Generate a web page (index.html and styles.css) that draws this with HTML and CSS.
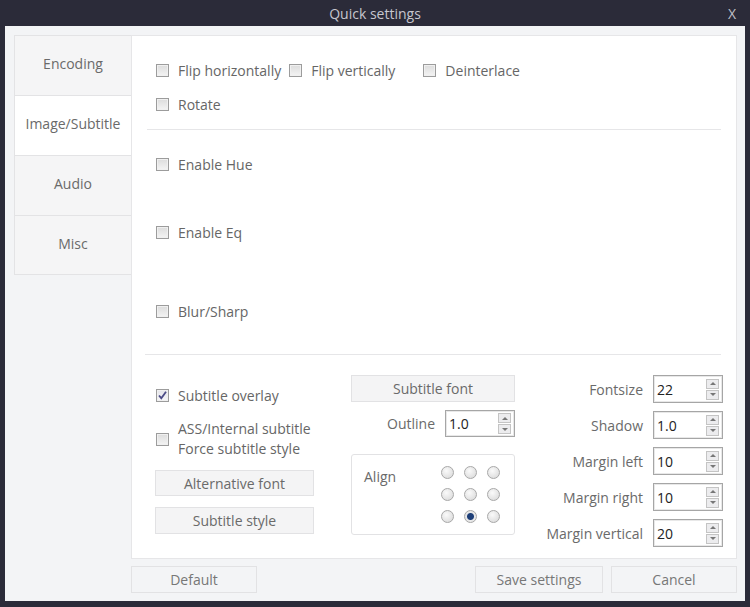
FILE: index.html
```html
<!DOCTYPE html>
<html lang="en">
<head>
  <meta charset="UTF-8">
  <title>Quick settings</title>
  <link rel="stylesheet" href="styles.css">
</head>
<body>
  <div class="window">
    <div class="titlebar">
      <span class="title">Quick settings</span>
      <span class="close">X</span>
    </div>

    <div class="frame">
      <div class="main">
        <div class="tabs">
          <div class="tab">Encoding</div>
          <div class="tab active">Image/Subtitle</div>
          <div class="tab">Audio</div>
          <div class="tab">Misc</div>
        </div>

        <div class="panel">
          <div class="row row-first">
            <label class="check"><span class="box"></span>Flip horizontally</label>
            <label class="check"><span class="box"></span>Flip vertically</label>
            <label class="check check-deint"><span class="box"></span>Deinterlace</label>
          </div>
          <div class="row row-rotate">
            <label class="check"><span class="box"></span>Rotate</label>
          </div>
          <div class="divider"></div>

          <div class="row row-hue">
            <label class="check"><span class="box"></span>Enable Hue</label>
          </div>
          <div class="row row-eq">
            <label class="check"><span class="box"></span>Enable Eq</label>
          </div>
          <div class="row row-blur">
            <label class="check"><span class="box"></span>Blur/Sharp</label>
          </div>
          <div class="divider divider-sub"></div>

          <div class="subs">
            <div class="col col-left">
              <label class="check"><span class="box checked">
                <svg width="11" height="11" viewBox="0 0 11 11"><path d="M2 5.5l2.3 2.7L9 1.8" fill="none" stroke="#4b4b86" stroke-width="1.8"/></svg>
              </span>Subtitle overlay</label>
              <label class="check check-two"><span class="box"></span>ASS/Internal subtitle<br>Force subtitle style</label>
              <button class="btn btn-alt">Alternative font</button>
              <button class="btn btn-style">Subtitle style</button>
            </div>

            <div class="col col-mid">
              <button class="btn">Subtitle font</button>
              <div class="field field-outline">
                <span class="field-label">Outline</span>
                <div class="spin"><span class="spin-value">1.0</span><span class="arrows"><i class="up"></i><i class="down"></i></span></div>
              </div>
              <div class="group">
                <span class="group-label">Align</span>
                <div class="radios">
                  <span class="radio"></span><span class="radio"></span><span class="radio"></span>
                  <span class="radio"></span><span class="radio"></span><span class="radio"></span>
                  <span class="radio"></span><span class="radio on"></span><span class="radio"></span>
                </div>
              </div>
            </div>

            <div class="col col-right">
              <div class="field">
                <span class="field-label">Fontsize</span>
                <div class="spin"><span class="spin-value">22</span><span class="arrows"><i class="up"></i><i class="down"></i></span></div>
              </div>
              <div class="field">
                <span class="field-label">Shadow</span>
                <div class="spin"><span class="spin-value">1.0</span><span class="arrows"><i class="up"></i><i class="down"></i></span></div>
              </div>
              <div class="field">
                <span class="field-label">Margin left</span>
                <div class="spin"><span class="spin-value">10</span><span class="arrows"><i class="up"></i><i class="down"></i></span></div>
              </div>
              <div class="field">
                <span class="field-label">Margin right</span>
                <div class="spin"><span class="spin-value">10</span><span class="arrows"><i class="up"></i><i class="down"></i></span></div>
              </div>
              <div class="field">
                <span class="field-label">Margin vertical</span>
                <div class="spin"><span class="spin-value">20</span><span class="arrows"><i class="up"></i><i class="down"></i></span></div>
              </div>
            </div>
          </div>
        </div>
      </div>

      <div class="footer">
        <button class="btn btn-foot">Default</button>
        <button class="btn btn-foot btn-save">Save settings</button>
        <button class="btn btn-foot">Cancel</button>
      </div>
    </div>
  </div>
</body>
</html>
```

FILE: styles.css
```css
* {
  margin: 0;
  padding: 0;
  box-sizing: border-box;
  font-family: "Open Sans", "Noto Sans", sans-serif;
}

body {
  width: 750px;
  height: 607px;
  background: #2b2b39;
  overflow: hidden;
}

.window {
  width: 750px;
  height: 607px;
}

.titlebar {
  position: relative;
  height: 26px;
  display: flex;
  align-items: center;
  justify-content: center;
  color: #c6c6ce;
  font-size: 14px;
}

.close {
  position: absolute;
  right: 14px;
  top: 4px;
  font-size: 14px;
  color: #c0c0c8;
}

.frame {
  margin: 0 5px;
  height: 575px;
  background: #f3f4f6;
  padding: 9px 8px 0 9px;
}

.main {
  display: flex;
  height: 524px;
}

.tabs {
  width: 117px;
  display: flex;
  flex-direction: column;
  align-self: flex-start;
  border: 1px solid #e3e3e5;
  border-right: none;
}

.tab {
  height: 60px;
  display: flex;
  align-items: center;
  justify-content: center;
  padding-bottom: 4px;
  font-size: 14px;
  color: #6a6a6a;
  background: #f5f5f6;
  border-bottom: 1px solid #e3e3e5;
}

.tab:last-child {
  border-bottom: none;
  height: 58px;
}

.tab.active {
  background: #fff;
}

.panel {
  flex: 1;
  background: #fff;
  border: 1px solid #e6e6e8;
  padding: 0 13px 0 15px;
}

.row {
  display: flex;
  align-items: center;
  height: 20px;
  padding-left: 9px;
}

.row-first { margin-top: 24px; }
.row-rotate { margin-top: 14px; }
.row-hue { margin-top: 24px; }
.row-eq { margin-top: 48px; }
.row-blur { margin-top: 59px; }

.divider {
  height: 1px;
  background: #e6e6e8;
  margin-top: 15px;
  margin-right: 2px;
}

.divider-sub {
  margin-top: 33px;
  margin-left: -2px;
}

.check {
  display: flex;
  align-items: center;
  gap: 9px;
  font-size: 14px;
  color: #666;
  margin-right: 8px;
  white-space: nowrap;
}

.check-deint {
  margin-left: 20px;
}

.box {
  width: 13px;
  height: 13px;
  border: 1px solid #9c9c9c;
  background: linear-gradient(#dcdcdc, #f4f4f4);
  box-shadow: inset 0 0 0 1px #f0f0f0;
  display: flex;
  align-items: center;
  justify-content: center;
  flex-shrink: 0;
}

.box.checked {
  background: linear-gradient(#e4e4ea, #f6f6f8);
}

.subs {
  display: flex;
  padding-top: 20px;
}

.col {
  display: flex;
  flex-direction: column;
}

.col-left {
  width: 159px;
  margin-left: 8px;
  padding-top: 11px;
}

.col-left .check {
  margin-left: 1px;
}

.check-two {
  margin-top: 14px;
  line-height: 20px;
}

.btn {
  height: 27px;
  border: 1px solid #e2e2e4;
  background: #f4f4f5;
  font-size: 14px;
  color: #6a6a6a;
  display: flex;
  align-items: center;
  justify-content: center;
}

.btn-alt {
  margin-top: 11px;
  height: 26px;
}

.btn-style {
  margin-top: 11px;
}

.col-mid {
  width: 164px;
  margin-left: 37px;
}

.field {
  display: flex;
  align-items: center;
  justify-content: flex-end;
  height: 28px;
  margin-bottom: 8px;
}

.field-outline {
  margin-top: 8px;
  height: 27px;
  margin-bottom: 0;
}

.field-label {
  font-size: 14px;
  color: #6a6a6a;
  margin-right: 10px;
}

.spin {
  width: 70px;
  height: 100%;
  border: 1px solid #a6a6a6;
  box-shadow: inset 0 0 0 1px #e8e8e8;
  background: #fff;
  display: flex;
  align-items: center;
  justify-content: space-between;
  padding: 0 3px 0 3px;
}

.spin-value {
  font-size: 14px;
  color: #222;
}

.arrows {
  display: flex;
  flex-direction: column;
  width: 13px;
  gap: 1px;
}

.arrows i {
  height: 10px;
  border: 1px solid #c4c4c4;
  background: #ececee;
  display: flex;
  align-items: center;
  justify-content: center;
}

.arrows i::after {
  content: "";
  border-left: 3px solid transparent;
  border-right: 3px solid transparent;
}

.arrows .up::after {
  border-bottom: 3px solid #777;
}

.arrows .down::after {
  border-top: 3px solid #777;
}

.group {
  margin-top: 17px;
  height: 81px;
  border: 1px solid #e2e2e4;
  border-radius: 3px;
  display: flex;
  padding: 12px 14px 0 12px;
  justify-content: space-between;
}

.group-label {
  font-size: 14px;
  color: #6a6a6a;
  line-height: 20px;
}

.radios {
  display: grid;
  grid-template-columns: repeat(3, 13px);
  grid-auto-rows: 13px;
  column-gap: 10px;
  row-gap: 9px;
  margin-top: -1px;
}

.radio {
  width: 13px;
  height: 13px;
  border-radius: 50%;
  border: 1px solid #a8a8a8;
  background: radial-gradient(circle at 40% 35%, #fafafa, #d6d6d6);
}

.radio.on {
  background: radial-gradient(circle, #1e3f78 0 3px, #e8e8e8 4px);
}

.col-right {
  flex: 1;
}

.footer {
  display: flex;
  margin-top: 7px;
  padding-left: 117px;
  gap: 8px;
}

.btn-foot {
  width: 126px;
  height: 27px;
  color: #777;
  background: #f3f4f6;
  border-color: #e2e2e4;
}

.btn-save {
  margin-left: auto;
  width: 128px;
}
```
